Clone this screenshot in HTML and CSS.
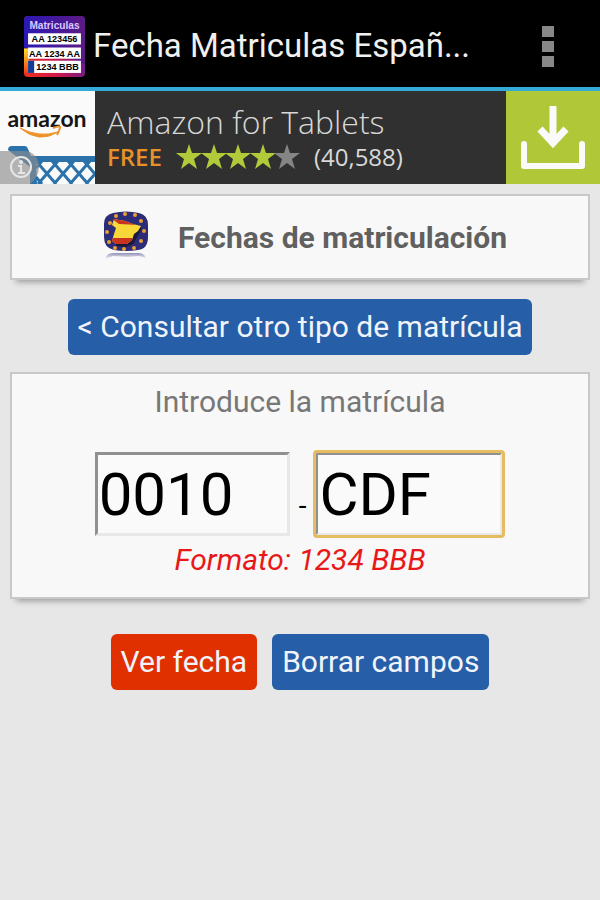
FILE: index.html
```html
<!DOCTYPE html>
<html lang="es">
<head>
  <meta charset="UTF-8">
  <meta name="viewport" content="width=device-width, initial-scale=1.0">
  <title>Fecha Matriculas España</title>
  <link rel="stylesheet" href="styles.css">
</head>
<body>
  <header class="topbar">
    <svg class="app-icon" viewBox="0 0 60 60">
      <defs>
        <linearGradient id="plateBg" x1="0" y1="1" x2="1" y2="0.7">
          <stop offset="0" stop-color="#f0301c"/>
          <stop offset="0.5" stop-color="#d01848"/>
          <stop offset="1" stop-color="#6a1a90"/>
        </linearGradient>
        <linearGradient id="plateTop" x1="0" y1="0" x2="1" y2="0">
          <stop offset="0" stop-color="#2a18b4"/>
          <stop offset="1" stop-color="#5c1a84"/>
        </linearGradient>
        <linearGradient id="plateSide" x1="0" y1="0" x2="0" y2="1">
          <stop offset="0" stop-color="#ffe020"/>
          <stop offset="1" stop-color="#f04018"/>
        </linearGradient>
      </defs>
      <rect width="60" height="60" rx="4" fill="url(#plateBg)"/>
      <path d="M4 0h52q4 0 4 4v44L30 32H0V4q0-4 4-4z" fill="url(#plateTop)"/>
      <path d="M0 32h5v24H0z" fill="url(#plateSide)"/>
      <rect x="4" y="17" width="52" height="11" fill="#fff"/>
      <rect x="4" y="31" width="52" height="11" fill="#fff"/>
      <rect x="4" y="44" width="52" height="12" fill="#fff"/>
      <rect x="4" y="44" width="6" height="12" fill="#163a98"/>
      <g font-family="Liberation Sans, sans-serif" font-weight="bold" font-size="9" text-anchor="middle">
        <text x="30" y="13" fill="#d8c8ff" font-size="10">Matriculas</text>
        <text x="30" y="26">AA 123456</text>
        <text x="30" y="40">AA 1234 AA</text>
        <text x="33" y="53">1234 BBB</text>
      </g>
    </svg>
    <h1 class="title">Fecha Matriculas Españ...</h1>
    <button class="menu" aria-label="Menú"><span></span><span></span><span></span></button>
  </header>

  <a class="ad" href="#">
    <svg class="ad-logo" viewBox="0 0 95 93">
      <rect width="95" height="93" fill="#fafafa"/>
      <text x="47" y="36" text-anchor="middle" font-family="Lato, sans-serif" font-weight="bold" font-size="23" fill="#151515">amazon</text>
      <path d="M20 37Q39 53 58 41Q39 47 20 37z" fill="#ee922a" stroke="#ee922a"/>
      <path d="M53 37q8-3 7 0t-3 7" fill="none" stroke="#ee922a" stroke-width="2"/>
      <path d="M8 59q0-4 4-4h13q2 0 3 3l3 7h64v6H36l1 22h-7V76z" fill="#2b72aa"/>
      <g stroke="#2b72aa" stroke-width="3" fill="none">
        <path d="M36 86l6 7M36 70l20 23M52 70l20 23M68 70l20 23M84 70l11 13"/>
        <path d="M42 70l-6 7M58 70L38 93M74 70L54 93M90 70L70 93M95 83l-9 10"/>
      </g>
      <path d="M0 60h25a14 16 0 0 1 14 16q0 10-9 17H0z" fill="#8c8c8c" opacity="0.65"/>
      <circle cx="21" cy="76" r="10" fill="none" stroke="#e6e6e6" stroke-width="2"/>
      <circle cx="21" cy="71" r="2" fill="#e6e6e6"/>
      <path d="M18 75h3v7M18 82h7" fill="none" stroke="#e6e6e6" stroke-width="2"/>
    </svg>
    <div class="ad-text">
      <div class="ad-name">Amazon for Tablets</div>
      <div class="ad-info">
        <span class="free">FREE</span>
        <svg class="stars" viewBox="0 0 124 26">
          <defs><path id="star" d="M13 0l3 9h10l-8 6 3 10-8-6-8 6 3-10-8-6h10z"/></defs>
          <g fill="#b0ca3a">
            <use href="#star"/>
            <use href="#star" x="25"/>
            <use href="#star" x="49"/>
            <use href="#star" x="74"/>
          </g>
          <use href="#star" x="98" fill="#858585"/>
        </svg>
        <span class="votes">(40,588)</span>
      </div>
    </div>
    <svg class="download" viewBox="0 0 94 93">
      <rect width="94" height="93" fill="#b0c838"/>
      <path d="M47 15v38M34 38l13 14 13-14" fill="none" stroke="#fafafa" stroke-width="7"/>
      <path d="M18 53v22h58V53" fill="none" stroke="#fafafa" stroke-width="6" stroke-linejoin="round" stroke-linecap="round"/>
    </svg>
  </a>

  <main>
    <div class="card heading">
      <svg class="flag" viewBox="0 0 46 52">
        <defs>
          <linearGradient id="reflection" x1="0" y1="0" x2="0" y2="1">
            <stop offset="0" stop-color="#9090b8"/>
            <stop offset="1" stop-color="#f8f8f8"/>
          </linearGradient>
          <clipPath id="spain"><path d="M11 8l11 2 8 3 8 2-3 5-4 3-2 6-5 4-11 0-4-3 2-7 2-6-4-3z"/></clipPath>
        </defs>
        <path d="M3 46q2-4 8-4h24q6 0 8 5l-7-2-12 1-14-1-7 3z" fill="url(#reflection)"/>
        <path d="M10 2Q23-1 36 2q9 2 9 12v12q0 12-10 13-12 2-24 0Q1 37 1 26V13Q1 4 10 2z" fill="#2d2c78"/>
        <path d="M14 13l11 2 9 2 5 0-5 9-4 7-7 3-10-1z" fill="#1c1a38"/>
        <g clip-path="url(#spain)">
          <rect width="46" height="40" fill="#f8d838"/>
          <path d="M8 7h16l12 7-20-1zM8 27h28v8H8z" fill="#c83420"/>
        </g>
        <g fill="#e8a030">
          <circle cx="22" cy="3" r="2"/><circle cx="32" cy="4" r="2"/><circle cx="38" cy="10" r="2"/>
          <circle cx="41" cy="20" r="2"/><circle cx="38" cy="30" r="2"/><circle cx="31" cy="37" r="2"/>
          <circle cx="21" cy="38" r="2"/><circle cx="12" cy="37" r="2"/><circle cx="6" cy="31" r="2"/>
          <circle cx="4" cy="21" r="2"/><circle cx="7" cy="12" r="2"/><circle cx="13" cy="5" r="2"/>
        </g>
      </svg>
      <h2>Fechas de matriculación</h2>
    </div>

    <a class="btn" href="#">&lt; Consultar otro tipo de matrícula</a>

    <form class="card plate" id="plateForm">
      <label for="numbers">Introduce la matrícula</label>
      <div class="fields">
        <input type="text" id="numbers" value="0010" maxlength="4">
        <span>-</span>
        <input type="text" class="active" id="letters" value="CDF" maxlength="3" aria-label="Letras">
      </div>
      <p class="format">Formato: 1234 BBB</p>
    </form>

    <div class="actions">
      <button class="btn red" type="submit" form="plateForm">Ver fecha</button>
      <button class="btn" type="reset" form="plateForm">Borrar campos</button>
    </div>
  </main>
</body>
</html>
```
FILE: styles.css
```css
* {
  box-sizing: border-box;
}
body {
  margin: 0;
  background-color: #e7e7e7;
  font-family: Roboto, sans-serif;
  font-size: 30px;
}
.topbar {
  display: flex;
  align-items: center;
  height: 91px;
  padding: 5px 46px 0 24px;
  background-color: #000;
  border-bottom: 4px solid #35abd9;
}
.app-icon {
  width: 61px;
  height: 61px;
}
.title {
  flex: 1;
  margin: 0 0 0 8px;
  color: #f0f0f0;
  font-size: 33px;
  font-weight: normal;
  line-height: 42px;
  white-space: nowrap;
}
.menu {
  display: flex;
  flex-direction: column;
  gap: 4px;
  padding: 0;
  background: none;
  border: none;
}
.menu span {
  width: 12px;
  height: 11px;
  background-color: #888;
}
.ad {
  display: flex;
  height: 93px;
  background-color: #303030;
  font-family: "Open Sans", sans-serif;
  color: #d8d8d8;
  text-decoration: none;
}
.ad-logo {
  width: 95px;
  height: 93px;
}
.ad-text {
  flex: 1;
  padding: 10px 0 0 12px;
  white-space: nowrap;
}
.ad-name {
  font-size: 32px;
  font-weight: 300;
  line-height: 42px;
}
.ad-info {
  display: flex;
  align-items: center;
  line-height: 28px;
  font-size: 24px;
}
.free {
  color: #e8912a;
  font-weight: 600;
}
.stars {
  width: 124px;
  height: 26px;
  margin: 0 14px;
}
.download {
  width: 94px;
  height: 93px;
}
main {
  display: flex;
  flex-direction: column;
  align-items: center;
  padding: 10px;
}
.card {
  width: 100%;
  background-color: #f8f8f8;
  border: 2px solid #c8c8c8;
  box-shadow: 0 8px 6px -6px #999;
}
.heading {
  display: flex;
  justify-content: center;
  align-items: center;
  gap: 29px;
  height: 86px;
  margin-bottom: 19px;
  padding-left: 10px;
}
.flag {
  width: 46px;
  height: 52px;
}
h2 {
  margin: 0;
  color: #606060;
  font-size: 30px;
}
.btn {
  padding: 0 10px;
  background-color: #265ea8;
  border: none;
  border-radius: 6px;
  color: #f0f4fa;
  font-family: inherit;
  font-size: 30px;
  line-height: 56px;
  text-decoration: none;
  white-space: nowrap;
}
.plate {
  margin-top: 17px;
  padding: 10px 0 19px;
  text-align: center;
}
.plate label {
  display: block;
  color: #777;
  line-height: 36px;
}
.fields {
  display: flex;
  justify-content: center;
  align-items: baseline;
  gap: 9px;
  margin-top: 32px;
  padding-right: 2px;
  font-size: 28px;
}
.fields input {
  width: 195px;
  height: 84px;
  padding: 0 1px;
  background-color: #fafafa;
  border: 3px solid;
  border-color: #909090 #e8e8e8 #e8e8e8 #909090;
  font-family: inherit;
  font-size: 60px;
}
.fields .active {
  width: 188px;
  outline: 3px solid #e5bc61;
  outline-offset: -1px;
  border-radius: 2px;
}
.format {
  margin: 6px 0 0;
  color: #e81818;
  font-style: italic;
  line-height: 36px;
}
.actions {
  display: flex;
  gap: 15px;
  margin-top: 35px;
}
.red {
  background-color: #e03000;
}
```
